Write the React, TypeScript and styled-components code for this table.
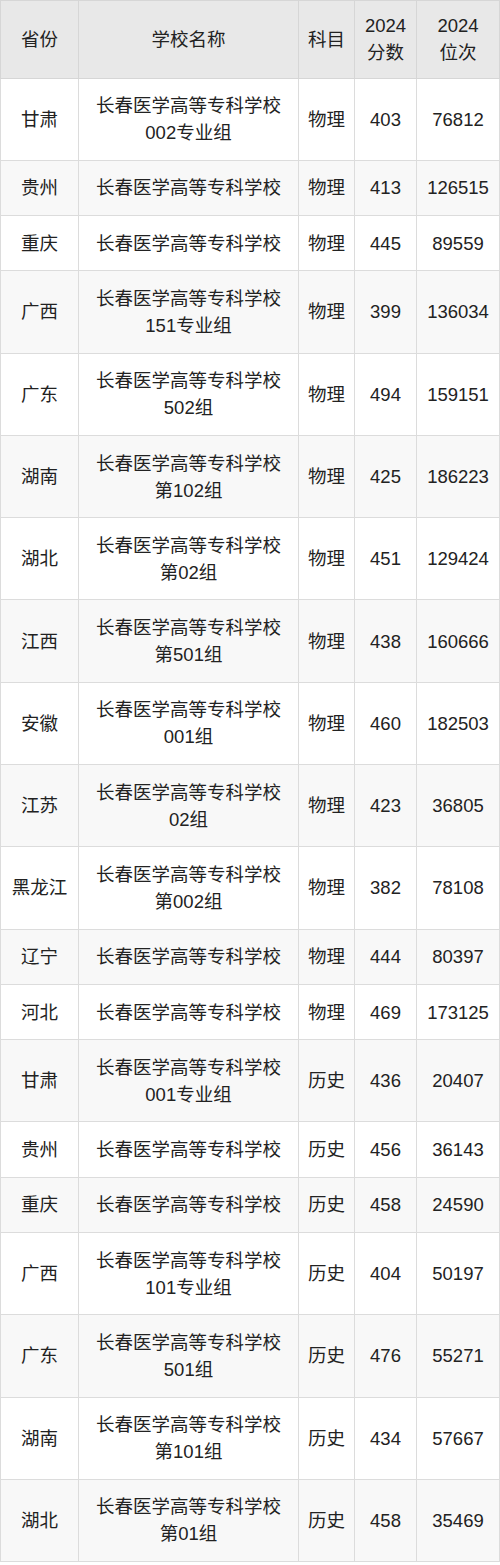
import React from "react";
import styled, { createGlobalStyle } from "styled-components";

const Global = createGlobalStyle`
  html, body { margin: 0; padding: 0; background: #ffffff; }
  body { font-family: "Liberation Sans", "Noto Sans CJK SC", sans-serif; }
`;

const Table = styled.table`
  width: 499px;
  border-collapse: collapse;
  table-layout: fixed;
  font-family: "Liberation Sans", "Noto Sans CJK SC", sans-serif;
  font-size: 18.5px;
  line-height: 27px;
  color: #222222;
  border: 1px solid #dcdcdc;
`;

const Col = styled.col<{ $w: number }>`
  width: ${(p) => p.$w}px;
`;

const HeadCell = styled.th`
  background: #e8e8e8;
  font-weight: 400;
  padding: 11.25px 0;
  border: 1px solid #d6d6d6;
  text-align: center;
  vertical-align: middle;
`;

const Row = styled.tr<{ $alt: boolean }>`
  background: ${(p) => (p.$alt ? "#f8f8f8" : "#ffffff")};
`;

const Cell = styled.td`
  padding: 13.65px 0;
  border: 1px solid #dcdcdc;
  text-align: center;
  vertical-align: middle;
  white-space: nowrap;
`;

type R = [string, string, string, string, string];

const rows: R[] = [
  ["甘肃", "长春医学高等专科学校\n002专业组", "物理", "403", "76812"],
  ["贵州", "长春医学高等专科学校", "物理", "413", "126515"],
  ["重庆", "长春医学高等专科学校", "物理", "445", "89559"],
  ["广西", "长春医学高等专科学校\n151专业组", "物理", "399", "136034"],
  ["广东", "长春医学高等专科学校\n502组", "物理", "494", "159151"],
  ["湖南", "长春医学高等专科学校\n第102组", "物理", "425", "186223"],
  ["湖北", "长春医学高等专科学校\n第02组", "物理", "451", "129424"],
  ["江西", "长春医学高等专科学校\n第501组", "物理", "438", "160666"],
  ["安徽", "长春医学高等专科学校\n001组", "物理", "460", "182503"],
  ["江苏", "长春医学高等专科学校\n02组", "物理", "423", "36805"],
  ["黑龙江", "长春医学高等专科学校\n第002组", "物理", "382", "78108"],
  ["辽宁", "长春医学高等专科学校", "物理", "444", "80397"],
  ["河北", "长春医学高等专科学校", "物理", "469", "173125"],
  ["甘肃", "长春医学高等专科学校\n001专业组", "历史", "436", "20407"],
  ["贵州", "长春医学高等专科学校", "历史", "456", "36143"],
  ["重庆", "长春医学高等专科学校", "历史", "458", "24590"],
  ["广西", "长春医学高等专科学校\n101专业组", "历史", "404", "50197"],
  ["广东", "长春医学高等专科学校\n501组", "历史", "476", "55271"],
  ["湖南", "长春医学高等专科学校\n第101组", "历史", "434", "57667"],
  ["湖北", "长春医学高等专科学校\n第01组", "历史", "458", "35469"],
];

const Lines = ({ text }: { text: string }) => (
  <>
    {text.split("\n").map((t, i, a) => (
      <React.Fragment key={i}>
        {t}
        {i < a.length - 1 && <br />}
      </React.Fragment>
    ))}
  </>
);

export default function App() {
  return (
    <>
      <Global />
      <Table>
        <colgroup>
          <Col $w={78} />
          <Col $w={220} />
          <Col $w={56} />
          <Col $w={62} />
          <Col $w={83} />
        </colgroup>
        <thead>
          <tr>
            <HeadCell>省份</HeadCell>
            <HeadCell>学校名称</HeadCell>
            <HeadCell>科目</HeadCell>
            <HeadCell>
              2024
              <br />
              分数
            </HeadCell>
            <HeadCell>
              2024
              <br />
              位次
            </HeadCell>
          </tr>
        </thead>
        <tbody>
          {rows.map((r, i) => (
            <Row key={i} $alt={i % 2 === 1}>
              <Cell>{r[0]}</Cell>
              <Cell>
                <Lines text={r[1]} />
              </Cell>
              <Cell>{r[2]}</Cell>
              <Cell>{r[3]}</Cell>
              <Cell>{r[4]}</Cell>
            </Row>
          ))}
        </tbody>
      </Table>
    </>
  );
}
